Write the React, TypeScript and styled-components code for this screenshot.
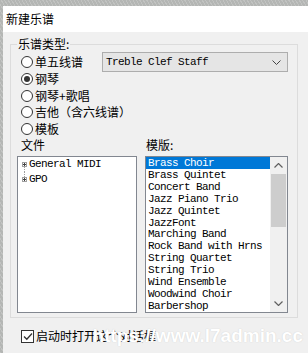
import React from "react";
import styled, { createGlobalStyle } from "styled-components";

const GlobalStyle = createGlobalStyle`
  html, body {
    margin: 0;
    padding: 0;
  }
  body {
    background: #b4b6b4;
    font-family: "Noto Sans CJK SC", "Noto Sans", sans-serif;
    color: #000;
  }
`;

const Frame = styled.div`
  position: relative;
  width: 308px;
  height: 353px;
  box-sizing: border-box;
  padding: 6px 0 0 3px;
  overflow: hidden;
  background: #b4b6b4
    repeating-linear-gradient(60deg, rgba(255, 255, 255, 0.18) 0 1px, transparent 1px 3px);
`;

const Window = styled.div`
  height: 100%;
  display: flex;
  flex-direction: column;
  background: #f0f0f0;
`;

const TitleBar = styled.div`
  height: 26px;
  padding-left: 3px;
  background: #fff;
  font-size: 12px;
  line-height: 25px;
`;

const Body = styled.div`
  padding: 5px 10px 0 7px;
`;

const Group = styled.fieldset`
  margin: 0;
  padding: 3px 9px 4px 6px;
  border: 1px solid #dcdcdc;
  min-width: 0;
`;

const Legend = styled.legend`
  padding: 0 1px;
  font-size: 12px;
  line-height: 14px;
`;

const RadioList = styled.div`
  display: flex;
  flex-direction: column;
  padding-left: 4px;
`;

const RadioRow = styled.div`
  height: 16.7px;
  display: flex;
  align-items: center;
  justify-content: space-between;
  font-size: 12px;
  line-height: 14px;
`;

const RadioLabel = styled.label`
  display: flex;
  align-items: center;
  gap: 2px;
  white-space: nowrap;
`;

const RadioDot = styled.span<{ checked?: boolean }>`
  width: 12px;
  height: 12px;
  box-sizing: border-box;
  border: 1px solid #333;
  border-radius: 50%;
  background: #fff;
  display: flex;
  align-items: center;
  justify-content: center;
  &::after {
    content: "";
    width: 6px;
    height: 6px;
    border-radius: 50%;
    background: ${({ checked }) => (checked ? "#333" : "transparent")};
  }
`;

const Select = styled.div`
  width: 186px;
  height: 20px;
  flex-shrink: 0;
  box-sizing: border-box;
  border: 1px solid #adadad;
  background: #e5e5e5;
  display: flex;
  align-items: center;
  justify-content: space-between;
  padding: 0 6px 0 3px;
  font-family: "Liberation Mono", monospace;
  font-size: 11px;
  letter-spacing: -0.6px;
`;

const Columns = styled.div`
  display: grid;
  grid-template-columns: 120px 143px;
  column-gap: 8px;
`;

const Column = styled.div`
  display: flex;
  flex-direction: column;
`;

const ColumnLabel = styled.div<{ inset?: number }>`
  height: 18.5px;
  font-size: 12px;
  line-height: 16px;
  padding-left: ${({ inset = 4 }) => inset}px;
`;

const ListBox = styled.div`
  height: 157px;
  box-sizing: border-box;
  border: 1px solid #828790;
  background: #fff;
  display: flex;
`;

const Items = styled.div`
  flex: 1;
  display: flex;
  flex-direction: column;
  font-family: "Liberation Mono", monospace;
  font-size: 11px;
  letter-spacing: -0.6px;
`;

const Item = styled.div<{ selected?: boolean }>`
  height: 12px;
  line-height: 12px;
  padding-left: 2px;
  white-space: nowrap;
  overflow: hidden;
  background: ${({ selected }) => (selected ? "#0078d7" : "transparent")};
  color: ${({ selected }) => (selected ? "#fff" : "#000")};
`;

const TreeRow = styled.div`
  height: 15px;
  line-height: 15px;
  display: flex;
  align-items: center;
  padding-left: 3px;
  white-space: nowrap;
`;

const ScrollBar = styled.div`
  width: 17px;
  display: flex;
  flex-direction: column;
  background: #f0f0f0;
`;

const ScrollButton = styled.div`
  height: 17px;
  display: flex;
  align-items: center;
  justify-content: center;
`;

const Thumb = styled.div`
  height: 53px;
  margin: 0 1px;
  background: #cdcdcd;
`;

const Track = styled.div`
  flex: 1;
`;

const Footer = styled.div`
  position: relative;
  margin-top: 12px;
  padding-left: 18px;
  display: flex;
  align-items: center;
  gap: 2px;
  height: 13px;
  font-size: 12px;
  line-height: 14px;
`;

const CheckBox = styled.span`
  width: 13px;
  height: 13px;
  box-sizing: border-box;
  border: 1px solid #333;
  background: #fff;
  display: flex;
  align-items: center;
  justify-content: center;
`;

const Watermark = styled.div`
  position: absolute;
  right: 5px;
  top: -5px;
  font-family: "Liberation Sans", Arial, sans-serif;
  font-weight: bold;
  font-size: 19px;
  line-height: 22px;
  color: #fff;
  text-shadow: 0 0 1px rgba(150, 150, 150, 0.45);
  white-space: nowrap;
`;

const Chevron = ({ up }: { up?: boolean }) => (
  <svg width="9" height="5" viewBox="0 0 9 5">
    <polyline
      points={up ? "0.5,4.5 4.5,0.5 8.5,4.5" : "0.5,0.5 4.5,4.5 8.5,0.5"}
      fill="none"
      stroke="#606060"
      strokeWidth="1.2"
    />
  </svg>
);

const Expander = ({ first }: { first?: boolean }) => (
  <svg width="8" height="15" viewBox="0 0 8 15">
    <line
      x1="3.5"
      y1={first ? 10 : 0}
      x2="3.5"
      y2={first ? 15 : 5}
      stroke="#a0a0a0"
      strokeDasharray="1 1"
    />
    <rect x="1.5" y="5.5" width="4" height="4" fill="#fff" stroke="#a0a0a0" />
    <line x1="2" y1="7.5" x2="5" y2="7.5" stroke="#404040" />
    <line x1="3.5" y1="6" x2="3.5" y2="9" stroke="#404040" />
  </svg>
);

const templates = [
  "Brass Choir",
  "Brass Quintet",
  "Concert Band",
  "Jazz Piano Trio",
  "Jazz Quintet",
  "JazzFont",
  "Marching Band",
  "Rock Band with Hrns",
  "String Quartet",
  "String Trio",
  "Wind Ensemble",
  "Woodwind Choir",
  "Barbershop",
];

const radios = ["钢琴", "钢琴+歌唱", "吉他（含六线谱）", "模板"];

export default function App() {
  return (
    <>
      <GlobalStyle />
      <Frame>
        <Window>
          <TitleBar>新建乐谱</TitleBar>
          <Body>
            <Group>
              <Legend>乐谱类型:</Legend>
              <RadioList>
                <RadioRow>
                  <RadioLabel>
                    <RadioDot />
                    单五线谱
                  </RadioLabel>
                  <Select>
                    <span>Treble Clef Staff</span>
                    <svg width="9" height="5" viewBox="0 0 9 5">
                      <polyline points="0.5,0.5 4.5,4.5 8.5,0.5" fill="none" stroke="#444" strokeWidth="1" />
                    </svg>
                  </Select>
                </RadioRow>
                {radios.map((r, i) => (
                  <RadioRow key={r}>
                    <RadioLabel>
                      <RadioDot checked={i === 0} />
                      {r}
                    </RadioLabel>
                  </RadioRow>
                ))}
              </RadioList>
              <Columns>
                <Column>
                  <ColumnLabel>文件</ColumnLabel>
                  <ListBox>
                    <Items>
                      <TreeRow>
                        <Expander first />
                        General MIDI
                      </TreeRow>
                      <TreeRow>
                        <Expander />
                        GPO
                      </TreeRow>
                    </Items>
                  </ListBox>
                </Column>
                <Column>
                  <ColumnLabel inset={1}>模版:</ColumnLabel>
                  <ListBox>
                    <Items>
                      {templates.map((t, i) => (
                        <Item key={t} selected={i === 0}>
                          {t}
                        </Item>
                      ))}
                    </Items>
                    <ScrollBar>
                      <ScrollButton>
                        <Chevron up />
                      </ScrollButton>
                      <Thumb />
                      <Track />
                      <ScrollButton>
                        <Chevron />
                      </ScrollButton>
                    </ScrollBar>
                  </ListBox>
                </Column>
              </Columns>
            </Group>
          </Body>
          <Footer>
            <CheckBox>
              <svg width="10" height="9" viewBox="0 0 10 9">
                <polyline points="1,4.5 3.8,7.3 9,1.5" fill="none" stroke="#333" strokeWidth="1.3" />
              </svg>
            </CheckBox>
            启动时打开这个对话框
            <Watermark>https://www.l7admin.cc</Watermark>
          </Footer>
        </Window>
      </Frame>
    </>
  );
}
